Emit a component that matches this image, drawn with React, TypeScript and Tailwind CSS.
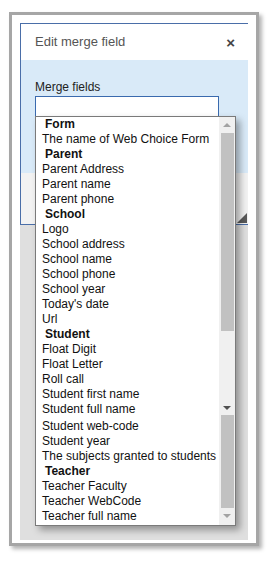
const groups: { title: string; items: string[] }[] = [
  { title: "Form", items: ["The name of Web Choice Form"] },
  { title: "Parent", items: ["Parent Address", "Parent name", "Parent phone"] },
  {
    title: "School",
    items: ["Logo", "School address", "School name", "School phone", "School year", "Today's date", "Url"],
  },
  {
    title: "Student",
    items: [
      "Float Digit",
      "Float Letter",
      "Roll call",
      "Student first name",
      "Student full name",
      "Student web-code",
      "Student year",
      "The subjects granted to students",
    ],
  },
  { title: "Teacher", items: ["Teacher Faculty", "Teacher WebCode", "Teacher full name"] },
];

const Scrollbar = () => (
  <div className="w-[16px] bg-[#f0f0f0] flex flex-col items-center">
    <div className="h-[16px] flex items-center justify-center">
      <div className="w-0 h-0 border-l-[4px] border-r-[4px] border-b-[4px] border-l-transparent border-r-transparent border-b-[#a3a3a3]" />
    </div>
    <div className="w-[13px] h-[198px] bg-[#c1c1c1]" />
    <div className="flex-1 max-h-[70px] h-[70px]" />
    <div className="h-[14px] flex items-center justify-center">
      <div className="w-0 h-0 border-l-[4px] border-r-[4px] border-t-[4px] border-l-transparent border-r-transparent border-t-[#505050]" />
    </div>
    <div className="w-[13px] h-[93px] bg-[#c1c1c1]" />
    <div className="h-[16px] flex items-center justify-center">
      <div className="w-0 h-0 border-l-[4px] border-r-[4px] border-t-[4px] border-l-transparent border-r-transparent border-t-[#a3a3a3]" />
    </div>
  </div>
);

const MergeList = () => (
  <div className="absolute left-[15px] top-[93px] w-[201px] h-[410px] bg-white border border-[#7a7a7a] shadow-[4px_4px_7px_rgba(0,0,0,0.35)] flex">
    <div className="flex-1 text-[12px] leading-[15px] text-[#111]">
      {groups.map((g) => (
        <div key={g.title}>
          <div className="h-[15px] pl-[9px] font-bold">{g.title}</div>
          {g.items.map((it) => (
            <div key={it} className={"h-[15px] pl-[6px] whitespace-nowrap" + (it === "Student full name" ? " mb-[2px]" : "")}>
              {it}
            </div>
          ))}
        </div>
      ))}
    </div>
    <Scrollbar />
  </div>
);

export default function App() {
  return (
    <div className="w-[268px] h-[563px] bg-white overflow-hidden font-['Liberation_Sans',Arial,sans-serif]">
      <div className="ml-[9px] mt-[12px] w-[250px] h-[534px] border-[3px] border-[#a6a6a6] bg-white pl-[8px] pr-[8px] pt-[8px] pb-[3px] shadow-[3px_3px_4px_rgba(0,0,0,0.3)]">
        <div className="relative h-full bg-[#dfdfdf] overflow-hidden">
          <div className="h-[202px] flex flex-col border-l border-t border-b border-[#4a6ea8] bg-white">
            <div className="h-[36px] flex items-center justify-between pl-[14px] pr-[13px]">
              <span className="text-[13px] text-[#555]">Edit merge field</span>
              <span className="text-[15px] font-bold text-[#444] leading-none">×</span>
            </div>
            <div className="h-[113px] bg-[#d9eaf8] pl-[14px] pt-[20px]">
              <div className="text-[12px] leading-[14px] text-[#222]">Merge fields</div>
              <div className="mt-[2px] w-[184px] h-[21px] bg-white border border-[#3a6aae]" />
            </div>
            <div className="flex-1 bg-[#f2f2f2] flex items-end justify-end pr-[1px] pb-[1px]">
              <div className="w-0 h-0 border-b-[10px] border-l-[10px] border-b-[#5a5a5a] border-l-transparent" />
            </div>
          </div>
          <MergeList />
        </div>
      </div>
    </div>
  );
}
